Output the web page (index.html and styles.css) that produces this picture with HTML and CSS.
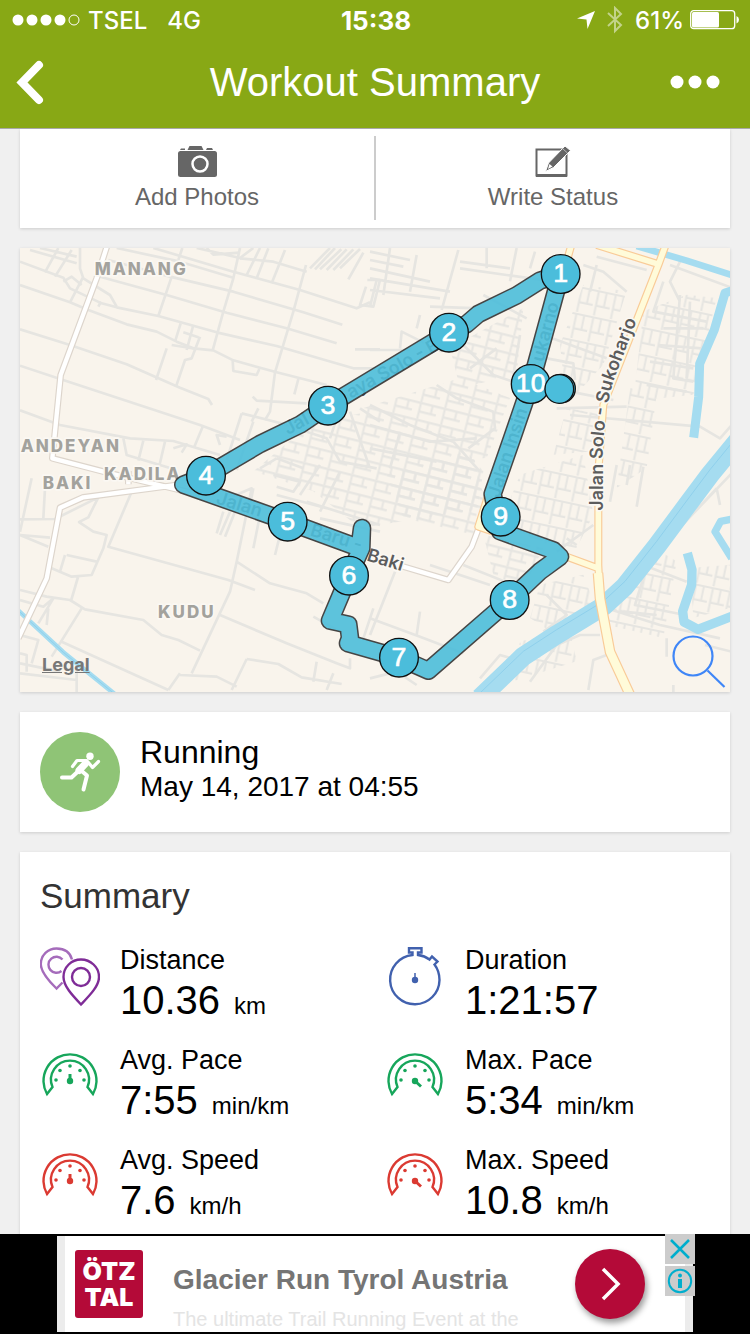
FILE: index.html
```html
<!DOCTYPE html>
<html lang="en">
<head>
  <meta charset="UTF-8" />
  <meta name="viewport" content="width=device-width, initial-scale=1.0"/>
  <title>Workout Summary</title>
  <link rel="stylesheet" href="styles.css">
</head>
<body>
  <header class="header">
    <div class="status">
      <div class="carrier">
        <svg width="68" height="14" viewBox="0 0 68 14" fill="#fff">
          <circle cx="6" cy="7" r="5.500"/><circle cx="20" cy="7" r="5.500"/><circle cx="34" cy="7" r="5.500"/><circle cx="48" cy="7" r="5.500"/>
          <circle cx="62" cy="7" r="5" fill="none" stroke="#fff"/>
        </svg>
        <span>TSEL</span>
        <span class="network">4G</span>
      </div>
      <div class="clock">15:38</div>
      <div class="indicators">
        <svg width="18" height="18" viewBox="0 0 18 18" fill="#fff"><path d="M18 0 10.500 18 9.500 8.500 0 7.500Z"/></svg>
        <svg class="bluetooth" width="16" height="28" viewBox="0 0 16 28" fill="none" stroke="#c3d38a" stroke-width="2"><path d="M1 7 14 19 8 25V2l6 6L1 20"/></svg>
        <span>61%</span>
        <svg width="50" height="20" viewBox="0 0 50 20"><rect x=".7" y=".7" width="44" height="18" rx="3" fill="none" stroke="#fff" stroke-width="1.300"/><rect x="2" y="2" width="27" height="15.500" rx="1.500" fill="#fff"/><path d="M46.500 6q2.500 1 2.500 3.700t-2.500 3.700z" fill="#fff"/></svg>
      </div>
    </div>
    <div class="navbar">
      <button class="nav-btn" aria-label="Back">
        <svg width="30" height="46" viewBox="0 0 30 46" fill="none" stroke="#fff" stroke-width="8" stroke-linecap="round"><path d="M25 6 8 23.500 25 41"/></svg>
      </button>
      <h1>Workout Summary</h1>
      <button class="nav-btn more" aria-label="More">
        <svg width="50" height="14" viewBox="0 0 50 14" fill="#fff"><circle cx="7" cy="7" r="6.500"/><circle cx="25" cy="7" r="6.500"/><circle cx="43" cy="7" r="6.500"/></svg>
      </button>
    </div>
  </header>

  <main>
    <section class="card actions">
      <button>
        <svg width="40" height="32" viewBox="0 0 40 32" fill="#666"><path d="M4 2.500h4v1.500H3zM12.500 0h12l2 4h-16zM30 2h5l1 2h-7z"/><rect x="1" y="5" width="39" height="26" rx="2.500"/><circle cx="23" cy="18" r="7.500" fill="none" stroke="#fff" stroke-width="2.500"/></svg>
        Add Photos
      </button>
      <button>
        <svg width="36" height="32" viewBox="0 0 36 32"><path d="M1.500 3.500h30v26h-30z" fill="none" stroke="#666" stroke-width="2"/><path d="M1 29.500h31" stroke="#666" stroke-width="3"/><path d="M30 0l5.500 4.500-17 17-8 4 3-8.500z" fill="#666" stroke="#fff" stroke-width="1"/><path d="M14.500 18l3 2.500-4.500 2.500z" fill="#fff"/><path d="M27.500 2.500l5 4.500" stroke="#bbb"/></svg>
        Write Status
      </button>
    </section>

    <section class="card map">
      <svg class="map-view" viewBox="0 0 2130 1332" role="img" aria-label="Route map">
        <defs>
          <pattern id="blocks" width="74" height="52" patternUnits="userSpaceOnUse" patternTransform="rotate(14)"><path d="M0 4h74M22 4v48M58 4v26M22 30h52"/></pattern>
          <pattern id="lanes" width="52" height="80" patternUnits="userSpaceOnUse" patternTransform="rotate(12)"><path d="M0 6h52M10 6v74M34 6v44M10 50h42"/></pattern>
          <path id="solo" d="M1748 788V630Q1750 510 1780 400L1868 170"/>
        </defs>
        <rect width="2130" height="1332" fill="#f9f4ec"/>

        <!-- dense neighbourhoods -->
        <g class="dense">
          <path fill="url(#blocks)" d="M1290 300l220-120-20 200-170 40zM1030 480l290-90 150 60-70 180-320 20zM880 520l180-30 300 130 40 160-380 60-140-110-180-60z"/>
          <path fill="url(#lanes)" d="M1690 110l130 20-70 220-110 120-20-180zM1870 190l130-50 90 10-70 290-180 20zM1500 680l190-60 30 180-60 120-220-90zM1640 480l110 20-30 110-120 10zM1830 420l80 20-30 220-90 60z"/>
          <path fill="url(#lanes)" d="M1560 1010l130-30 30 80-130 90-60-40zM1800 1040l120-130 50 30-40 230-170-40zM2010 960l120-10v130l-110 30zM1500 1180l150-30 20 90-190 60z"/>
          <path fill="url(#blocks)" d="M1100 680l240-70 50 60-30 190-210-50zM1390 860l180 40-60 120-90-40z"/>
        </g>

        <!-- streets -->
        <g class="street">
          <g transform="translate(0 -9)">
            <path d="M0 50 130 98l20 32 95 45 45 12 125 26 175 49 180 41 230 67h80M0 120l150 52 55 23 115 43 90 22 60 30 50 20 60 6 60 30 130 36 150 38M0 253l150 47 170 58 160 70 85 34 11 18M0 362l150 50 390 128 120 45M0 496l120 44 210 40 130 8 140 42"/>
            <path d="M240 95l200 55 180 53 180 47 150 45M265 45l185 50 190 45 210 62 117 37M290 9l190 41 160 48M400 9l240 71 200 55 170 55 40-18M660 40l100 10 100 30"/>
            <path d="M180 9v61l10 30 80 50 20 35M190 95l-40 77M415 213l40-118M475 45l12-36M660 9l-20 91-30 100-32 116M858 60l-38 140-55 182-15 118-15 25M440 310l-32 95M468 425l27-80 20-5 25-65M465 290l17-55M520 240l-20 75M455 300l75 12M490 262l45 15M638 346l2 32 70 12 8-18M835 402l-12 46M698 455l12 12 150 8"/>
            <path d="M30 15l140 40M60 9l110 26M75 82l40-73M105 95l50-80M130 110l25-15 30 25M235 185l8-15M530 9l130 30 40-30M680 90l40-81M710 100l35-90M755 115l40-100M560 9l20 20 80-6M870 70l60-61M885 73l60-64M900 73l64-60M920 75l60-62M940 75l60-62M960 70l60-58M985 103l45-80M1005 313h75M1042 105h38M1038 125l-18 55 40 5 20-80"/>
            <path d="M665 505l-45 140M665 505l150 38 60-30M700 530l-50 145M548 545l-25 60M310 580l10 50 150 45M370 587l-15 60M435 590l-20 85M460 610l40-12-15 25M600 600l-10-30 30 5M715 490l-20 40M770 640l-50 30M770 640l80 30M860 560l60 20 40 70 110 20M960 490l-30 90M990 500l60 170M1020 490l60 40"/>
          </g>
          <g transform="translate(1050 -9)">
            <path d="M0 20l120 25M0 45l100 20M0 100l240 40M0 135l210 25M0 70l180 40M60 9L40 150M140 30l-20 110M265 15l-50 180M180 185l150 5M0 185l20-80M140 250l10-40M90 310l5-50 120 60M270 50l150 20M270 70l280 40M340 150l130 70M350 70V9M440 9l-20 100M480 70l15-50M0 315h120M280 300l90 90 60 20M300 370l80-60M450 270l-20 120M520 270l190 70M530 340l80 15 5 50M560 490l210-5M600 440l130 25M600 510l390 35 60 35 40-45"/>
            <path d="M680 35l150 40M640 60l60 20 70 60M680 60l-20 80M900 60l190 70M930 50l-30 60 30 60M880 110l-30 90 160 30M930 150l-20 250 60 10M960 170l-10 230M880 250h120M865 300l130 10M840 350l130 20M830 420l120 20M0 480l120 60 130 50 80 90M200 420l60 40 110 40 5 50-80 60M0 540l180 50 140-10M0 610l200 40M90 560l-30 110"/>
          </g>
          <g transform="translate(0 651)">
            <path d="M0 163l105-1 130-65M0 210l90 8M0 210l85 35M35 40L0 200M75 70l-5 90M175 170l45 30 40 10-10 40-35 80-60 5-60-25M235 97l-30 60-30 15M335 80l-70 165 360 100 80 30M140 270l90 20M135 270l-15 50M175 333l-22 75M0 375l80 20 70 10 45 28 175 32 55 45 50 15 65 32M0 405l70 20 30-25M185 430l-90 145M100 400l-45 75M85 430l-5 50M125 530l320 145M625 100l70-30-45 220-20 90-115 245M650 290l100 65 110 30 50 30M600 450l200 85 150 60 40 15v-30M480 625l-35 50M480 630l110 5 60 30M680 582l95 15 70 40 120 20M680 582l-45 93M890 590l-10 60M940 625l-20 50M0 510l55 15-20 70M0 565l20 5v50M0 625l170 20M170 600v90M0 595l120 25"/>
            <path d="M630 140l-30 70M645 140l-30 75M610 140l-20 65M720 150l-20 100M780 210l-15 60M700 70l-10 50M760 30l80 20-20 30-50-15M770 90l150 40M900 0l-60 90M960 20l-60 120M860 110l220 70M900 160l180 40M1060 430l-30 90M880 455l90 50"/>
          </g>
          <g transform="translate(1050 651)">
            <path d="M75 320L0 510M0 460l150 55 130 50M150 440l-10 70M180 300l180 60M280 300l150 60M560 260l110-80M620 240l-30-20M800 125l20-120M740 0l-20 110M780 0l-10 60M1040 70L900 220 700 430M1040 70l10 50M1090 20l-230 240M820 300l130 50M835 290l-40 130 150 30M710 430l160 50 180 40M760 440l100 10M690 510H630l-70 30-80 110M710 570l-40 15-15 90M520 500l70-50-60-60M330 640l60-70 70 20M0 640l80-20 60 40M890 520v55M910 660v25M1085 560l-80-20"/>
          </g>
        </g>

        <!-- water -->
        <g class="water">
          <path stroke-width="20" d="M1850-6 2000 38l140 45"/>
          <path stroke-width="27" stroke-linecap="butt" d="M2140 127l-25 8-32 110-44 102-3 100-15 122"/>
          <path stroke-width="58" d="M2160 570l-90 110-60 80-100 135-95 120-65 60-140 85-100 65-130 125"/>
          <path stroke-width="28" stroke-linecap="butt" d="M2002 915l14 50-1 45-27 80 4 32 42 22 110-42"/>
          <path stroke-width="22" d="M2150 811l-48 9-17 31 50 80"/>
          <path stroke-width="14" d="M-10 1083l140 130 160 130"/>
        </g>
        <path class="current" d="M2160 555l-90 110-60 80-100 135-95 120-65 60-140 85-100 65-130 125M-10 1083l140 130 160 130"/>

        <!-- minor roads, then highways -->
        <g class="road-case"><path d="M262-9l-32 100L122 381 97 631l173 45 250 60M470 711l-280 37-70 31-40 212L-5 1171M325 709v-40M1374 846l-19 50-70 100-185-55"/></g>
        <g class="road"><path d="M262-9l-32 100L122 381 97 631l173 45 250 60M470 711l-280 37-70 31-40 212L-5 1171M325 709v-40M1374 846l-19 50-70 100-185-55"/></g>
        <g class="highway-case"><path d="M1654-9l-14 50M1730-9l187 58M1937-9l-22 60-55 140-110 280-15 200v280l5 100 30 160 60 130M1640 926l95 35M1405 741l-30 95 75 25"/><path class="wide" d="M1734 975l6 76 30 160 60 130"/></g>
        <g class="highway"><path d="M1654-9l-14 50M1730-9l187 58M1937-9l-22 60-55 140-110 280-15 200v280l5 100 30 160 60 130M1640 926l95 35M1405 741l-30 95 75 25"/><path class="wide" d="M1734 975l6 76 30 160 60 130"/></g>

        <!-- place names -->
        <g class="place">
          <text x="224" y="81">MANANG</text>
          <text x="2" y="612">ANDEYAN</text>
          <text x="252" y="695">KADILA</text>
          <text x="68" y="724">BAKI</text>
          <text x="414" y="1111">KUDU</text>
        </g>
        <g class="street-name">
          <text><textPath href="#solo">Jalan Solo - Sukoharjo</textPath></text>
          <text transform="translate(804 562) rotate(-29)">Jal</text>
          <text transform="translate(992 452) rotate(-29)">aya Solo - B</text>
          <text transform="translate(586 766) rotate(17)">Jalan</text>
          <text transform="translate(868 862) rotate(17)">Baru -</text>
          <text transform="translate(1437 752) rotate(-72)">Jalan Insin</text>
          <text transform="translate(1570 344) rotate(-75)">ukarno</text>
          <text transform="translate(1038 937) rotate(17)">Baki</text>
        </g>

        <!-- workout track -->
        <g class="track">
          <path class="track-edge" d="M1532 408 1622 78 1560 98 1490 142 1375 198 1340 228 1287 254 924 473 840 530 720 588 558 683 490 710 803 821 1018 900 1026 840 1024 900 987 983 930 1118 985 1130 990 1170 984 1186 1137 1229 1225 1268 1469 1056 1560 970 1620 926 1600 907 1441 850 1418 738 1480 560Z"/>
          <path class="track-line" d="M1532 408 1622 78 1560 98 1490 142 1375 198 1340 228 1287 254 924 473 840 530 720 588 558 683 490 710 803 821 1018 900 1026 840 1024 900 987 983 930 1118 985 1130 990 1170 984 1186 1137 1229 1225 1268 1469 1056 1560 970 1620 926 1600 907 1441 850 1418 738 1480 560Z"/>
        </g>
        <g class="pin">
          <circle cx="1622" cy="78" r="58"/><text x="1622" y="102">1</text>
          <circle cx="1287" cy="254" r="58"/><text x="1287" y="278">2</text>
          <circle cx="924" cy="473" r="58"/><text x="924" y="497">3</text>
          <circle cx="558" cy="683" r="58"/><text x="558" y="707">4</text>
          <circle cx="803" cy="821" r="58"/><text x="803" y="845">5</text>
          <circle cx="987" cy="983" r="58"/><text x="987" y="1007">6</text>
          <circle cx="1137" cy="1229" r="58"/><text x="1137" y="1253">7</text>
          <circle cx="1469" cy="1056" r="58"/><text x="1469" y="1080">8</text>
          <circle cx="1442" cy="806" r="58"/><text x="1442" y="830">9</text>
          <circle cx="1532" cy="408" r="58"/><text x="1532" y="432">10</text>
          <circle cx="1623" cy="422" r="43"/><circle cx="1618" cy="423" r="43"/>
        </g>
      </svg>
      <a class="legal" href="#">Legal</a>
      <button class="zoom" aria-label="Enlarge map">
        <svg width="54" height="54" viewBox="0 0 54 54" fill="none" stroke="#3f86f7" stroke-width="2.200"><circle cx="21" cy="21" r="19.500"/><path d="M35.500 35.500 52.500 52"/></svg>
      </button>
    </section>

    <section class="card activity">
      <svg width="80" height="80" viewBox="0 0 80 80" fill="none" stroke="#fff" stroke-linecap="round" stroke-linejoin="round">
        <circle cx="40" cy="40" r="40" fill="#8fc476" stroke="none"/>
        <circle cx="50" cy="24.300" r="3.700" fill="#fff" stroke="none"/>
        <path stroke-width="3.200" d="M32.500 34.500 37 28.500h10M48 30l4.500 5.500 6-6"/>
        <path stroke-width="7" d="M45.500 31.500 39 38.500"/>
        <path stroke-width="4" d="M22 45.500h9.500l8-7.500M41 38.500l6 5-3.500 14"/>
      </svg>
      <div>
        <h2>Running</h2>
        <p>May 14, 2017 at 04:55</p>
      </div>
    </section>

    <section class="card summary">
      <h2>Summary</h2>
      <div class="stats">
        <div class="stat">
          <svg width="60" height="60" viewBox="0 0 60 60" fill="none" stroke-width="2.400"><path stroke="#a56cbb" d="M32 12.500C30 5 25 1.500 16.500 1.500 8 1.500.8 8 .8 17c0 8 8 17 15.700 24.500l6-6M22.500 12.500a8 8 0 1 0-1 11.500"/><path stroke="#7f2c97" d="M41 57.500C32 48 23.500 39 23.500 30c0-10 8-17.500 17.500-17.500S59 20 59 30c0 9-9 18-18 27.500z"/><circle cx="41" cy="30" r="9" stroke="#7f2c97"/></svg>
          <div><h3>Distance</h3><p>10.36<small>km</small></p></div>
        </div>
        <div class="stat">
          <svg width="60" height="60" viewBox="0 0 60 60" fill="none" stroke="#4161ae" stroke-width="2.400"><path d="M27.500 8V5.500H24V1.200h12.500v4.300H33V8c4.500.5 8 1.800 11.500 4.500l2.500-3 5.500 5-3 3c3 4 5 9 5 15.500a24.700 24.700 0 1 1-27-25z"/><circle cx="30" cy="33" r="3.200" fill="#4161ae" stroke="none"/><path d="M30 33v-7" stroke-width="1.500"/></svg>
          <div><h3>Duration</h3><p>1:21:57</p></div>
        </div>
        <div class="stat">
          <svg class="gauge pace" width="60" height="60" viewBox="0 0 60 60"><path d="M7 47A26.500 26.500 0 1 1 53 47L47.500 40A19 19 0 1 0 12.500 40Z"/><g class="dots"><circle cx="16" cy="33" r="1.800"/><circle cx="20" cy="23.500" r="1.800"/><circle cx="30" cy="19" r="1.800"/><circle cx="40" cy="23.500" r="1.800"/><circle cx="44" cy="33" r="1.800"/><circle cx="30" cy="34" r="3.200"/></g><path class="needle" d="M30 34v-7"/></svg>
          <div><h3>Avg. Pace</h3><p>7:55<small>min/km</small></p></div>
        </div>
        <div class="stat">
          <svg class="gauge pace" width="60" height="60" viewBox="0 0 60 60"><path d="M7 47A26.500 26.500 0 1 1 53 47L47.500 40A19 19 0 1 0 12.500 40Z"/><g class="dots"><circle cx="16" cy="33" r="1.800"/><circle cx="20" cy="23.500" r="1.800"/><circle cx="30" cy="19" r="1.800"/><circle cx="40" cy="23.500" r="1.800"/><circle cx="44" cy="33" r="1.800"/><circle cx="30" cy="34" r="3.200"/></g><path class="needle" d="M30 34l6 5.500"/></svg>
          <div><h3>Max. Pace</h3><p>5:34<small>min/km</small></p></div>
        </div>
        <div class="stat">
          <svg class="gauge speed" width="60" height="60" viewBox="0 0 60 60"><path d="M7 47A26.500 26.500 0 1 1 53 47L47.500 40A19 19 0 1 0 12.500 40Z"/><g class="dots"><circle cx="16" cy="33" r="1.800"/><circle cx="20" cy="23.500" r="1.800"/><circle cx="30" cy="19" r="1.800"/><circle cx="40" cy="23.500" r="1.800"/><circle cx="44" cy="33" r="1.800"/><circle cx="30" cy="34" r="3.200"/></g><path class="needle" d="M30 34v-7"/></svg>
          <div><h3>Avg. Speed</h3><p>7.6<small>km/h</small></p></div>
        </div>
        <div class="stat">
          <svg class="gauge speed" width="60" height="60" viewBox="0 0 60 60"><path d="M7 47A26.500 26.500 0 1 1 53 47L47.500 40A19 19 0 1 0 12.500 40Z"/><g class="dots"><circle cx="16" cy="33" r="1.800"/><circle cx="20" cy="23.500" r="1.800"/><circle cx="30" cy="19" r="1.800"/><circle cx="40" cy="23.500" r="1.800"/><circle cx="44" cy="33" r="1.800"/><circle cx="30" cy="34" r="3.200"/></g><path class="needle" d="M30 34l6 5.500"/></svg>
          <div><h3>Max. Speed</h3><p>10.8<small>km/h</small></p></div>
        </div>
      </div>
    </section>
  </main>

  <aside class="ad">
    <div class="banner">
      <div class="brand"><span>ÖTZ</span><span>TAL</span></div>
      <div class="ad-text">
        <strong>Glacier Run Tyrol Austria</strong>
        <p>The ultimate Trail Running Event at the</p>
      </div>
      <a class="ad-go" href="#" aria-label="Open">
        <svg width="22" height="34" viewBox="0 0 22 34" fill="none" stroke="#fff" stroke-width="3.500"><path d="M4 2l15 15L4 32"/></svg>
      </a>
      <div class="ad-tools">
        <button aria-label="Close ad"><svg width="20" height="20" viewBox="0 0 20 20" stroke="#00aecd" stroke-width="2.500"><path d="M1 1l18 18M19 1 1 19"/></svg></button>
        <button aria-label="Ad info"><svg width="26" height="26" viewBox="0 0 26 26" fill="none" stroke="#00aecd"><circle cx="13" cy="13" r="11.200" stroke-width="2"/><path d="M13 11v9" stroke-width="4"/><circle cx="13" cy="7.500" r="2" fill="#00aecd" stroke="none"/></svg></button>
      </div>
    </div>
  </aside>
</body>
</html>
```

FILE: styles.css
```css
* { box-sizing: border-box; }
body {
  margin: 0;
  height: 100vh;
  display: flex;
  flex-direction: column;
  font-family: "Liberation Sans", Arial, sans-serif;
  background: #f0f0f0;
  color: #000;
}
h1, h2, h3, p { margin: 0; font-weight: normal; }
svg { display: block; flex: none; }
button {
  background: none;
  border: none;
  padding: 0;
  font: inherit;
  color: inherit;
  cursor: pointer;
}

.header {
  background: #88a815;
  color: #fff;
  border-bottom: 1px solid #a9a9a9;
  position: relative;
}
.status {
  display: grid;
  grid-template-columns: 1fr auto 1fr;
  align-items: center;
  height: 40px;
  padding: 0 10px 0 12px;
  font-family: Inter, sans-serif;
  font-size: 24px;
  font-weight: 500;
}
.carrier, .indicators { display: flex; align-items: center; gap: 8px; }
.network { margin-left: 12px; }
.clock { font-size: 26px; font-weight: 700; }
.indicators { justify-content: flex-end; gap: 6px; }
.bluetooth { margin: 0 6px; }
.navbar {
  display: flex;
  align-items: center;
  justify-content: space-between;
  height: 88px;
  padding: 0 14px 4px;
}
.navbar h1 { font-size: 40px; line-height: 48px; }
.nav-btn { width: 70px; display: flex; }
.more { justify-content: flex-end; padding-right: 16px; }

main {
  flex: 1;
  min-height: 0;
  overflow-y: auto;
  scrollbar-width: none;
  padding: 0 20px;
  display: flex;
  flex-direction: column;
  gap: 20px;
}
.card {
  background: #fff;
  flex: none;
  box-shadow: 0 1px 3px rgba(0, 0, 0, 0.15);
}

.actions { display: flex; padding: 7px 0 8px; }
.actions button {
  flex: 1;
  height: 84px;
  display: flex;
  flex-direction: column;
  align-items: center;
  gap: 4px;
  padding-top: 10px;
  font-size: 24px;
  line-height: 30px;
  color: #666;
}
.actions button + button { border-left: 2px solid #ccc; }

.map { position: relative; }
.map-view { width: 100%; height: auto; }
pattern path { fill: none; stroke: #e6e5e1; stroke-width: 6; }
.street { fill: none; stroke: #e6e5e1; stroke-width: 8; stroke-linejoin: round; }
.water { fill: none; stroke: #a5dcf0; stroke-linejoin: round; }
.current { fill: none; stroke: #8fd0ec; stroke-width: 3; }
.road, .road-case, .highway, .highway-case { fill: none; stroke-linejoin: round; }
.road-case { stroke: #ddd5cc; stroke-width: 20; }
.road { stroke: #fff; stroke-width: 13; }
.highway-case { stroke: #f9cb98; stroke-width: 24; }
.highway-case .wide { stroke-width: 32; }
.highway { stroke: #fffbd9; stroke-width: 17; }
.highway .wide { stroke-width: 25; }
.place text, .street-name text {
  font-family: Inter, sans-serif;
  paint-order: stroke;
  stroke: #fbf8f3;
  stroke-width: 10;
  stroke-linejoin: round;
}
.place text { font-size: 51px; font-weight: 800; letter-spacing: 6px; fill: #a3a29d; }
.street-name text { font-size: 54px; font-weight: 600; fill: #5c5c5c; }
.track { fill: none; stroke-linejoin: round; stroke-linecap: round; opacity: 0.9; }
.track-edge { stroke: #333; stroke-width: 56; }
.track-line { stroke: #4dbedb; stroke-width: 47; }
.pin circle { fill: #4bbddb; stroke: #111; stroke-width: 4; }
.pin text { fill: #fff; font-size: 80px; text-anchor: middle; stroke: #fff; stroke-width: 2; }
.legal {
  position: absolute;
  left: 22px;
  bottom: 15px;
  font: 700 18px/24px Inter, sans-serif;
  color: #777;
}
.zoom { position: absolute; right: 4px; bottom: 3px; }

.activity {
  display: flex;
  gap: 20px;
  padding: 20px;
}
.activity h2 { font-size: 32px; line-height: 40px; }
.activity p { font-size: 28px; line-height: 30px; }

.summary { padding: 20px; }
.summary h2 {
  font-size: 35px;
  line-height: 48px;
  margin-bottom: 20px;
  color: #333;
}
.stats {
  display: grid;
  grid-template-columns: 1fr 1fr;
  gap: 20px;
}
.stat { display: flex; gap: 20px; }
.stat svg { margin-top: 7px; }
.stat h3 { font-size: 27px; line-height: 40px; }
.stat p { font-size: 40px; line-height: 40px; }
.stat small { font-size: 24px; line-height: 24px; margin-left: 14px; }
.gauge { fill: none; stroke: currentColor; stroke-width: 2.4; }
.gauge .dots { fill: currentColor; stroke: none; }
.gauge .needle { stroke-width: 3; }
.pace { color: #17a65b; }
.speed { color: #db3a32; }

.ad {
  background: #000;
  height: 100px;
  flex: none;
  padding: 2px 57px;
}
.banner {
  position: relative;
  height: 96px;
  display: flex;
  align-items: center;
  padding: 0 40px 0 10px;
  background: #fff;
  border: solid #ececec;
  border-width: 0 8px;
}
.brand {
  width: 68px;
  height: 68px;
  border-radius: 3px;
  background: #b40a38;
  color: #fff;
  font: 900 25px/26px Inter, sans-serif;
  display: flex;
  flex-direction: column;
  align-items: center;
  justify-content: center;
}
.ad-text { flex: 1; margin-left: 30px; padding-top: 24px; align-self: flex-start; white-space: nowrap; }
.ad-text strong { display: block; font-size: 28px; line-height: 40px; color: #757575; }
.ad-text p { font-size: 20px; line-height: 38px; color: #e4e4e4; }
.ad-go {
  width: 70px;
  height: 70px;
  border-radius: 50%;
  background: #b40a38;
  box-shadow: 2px 4px 6px rgba(0, 0, 0, 0.4);
  display: flex;
  align-items: center;
  justify-content: center;
}
.ad-tools {
  position: absolute;
  top: -2px;
  right: -10px;
  display: grid;
  gap: 2px;
}
.ad-tools button {
  width: 30px;
  height: 30px;
  background: #ccc;
  display: flex;
  align-items: center;
  justify-content: center;
}
```
